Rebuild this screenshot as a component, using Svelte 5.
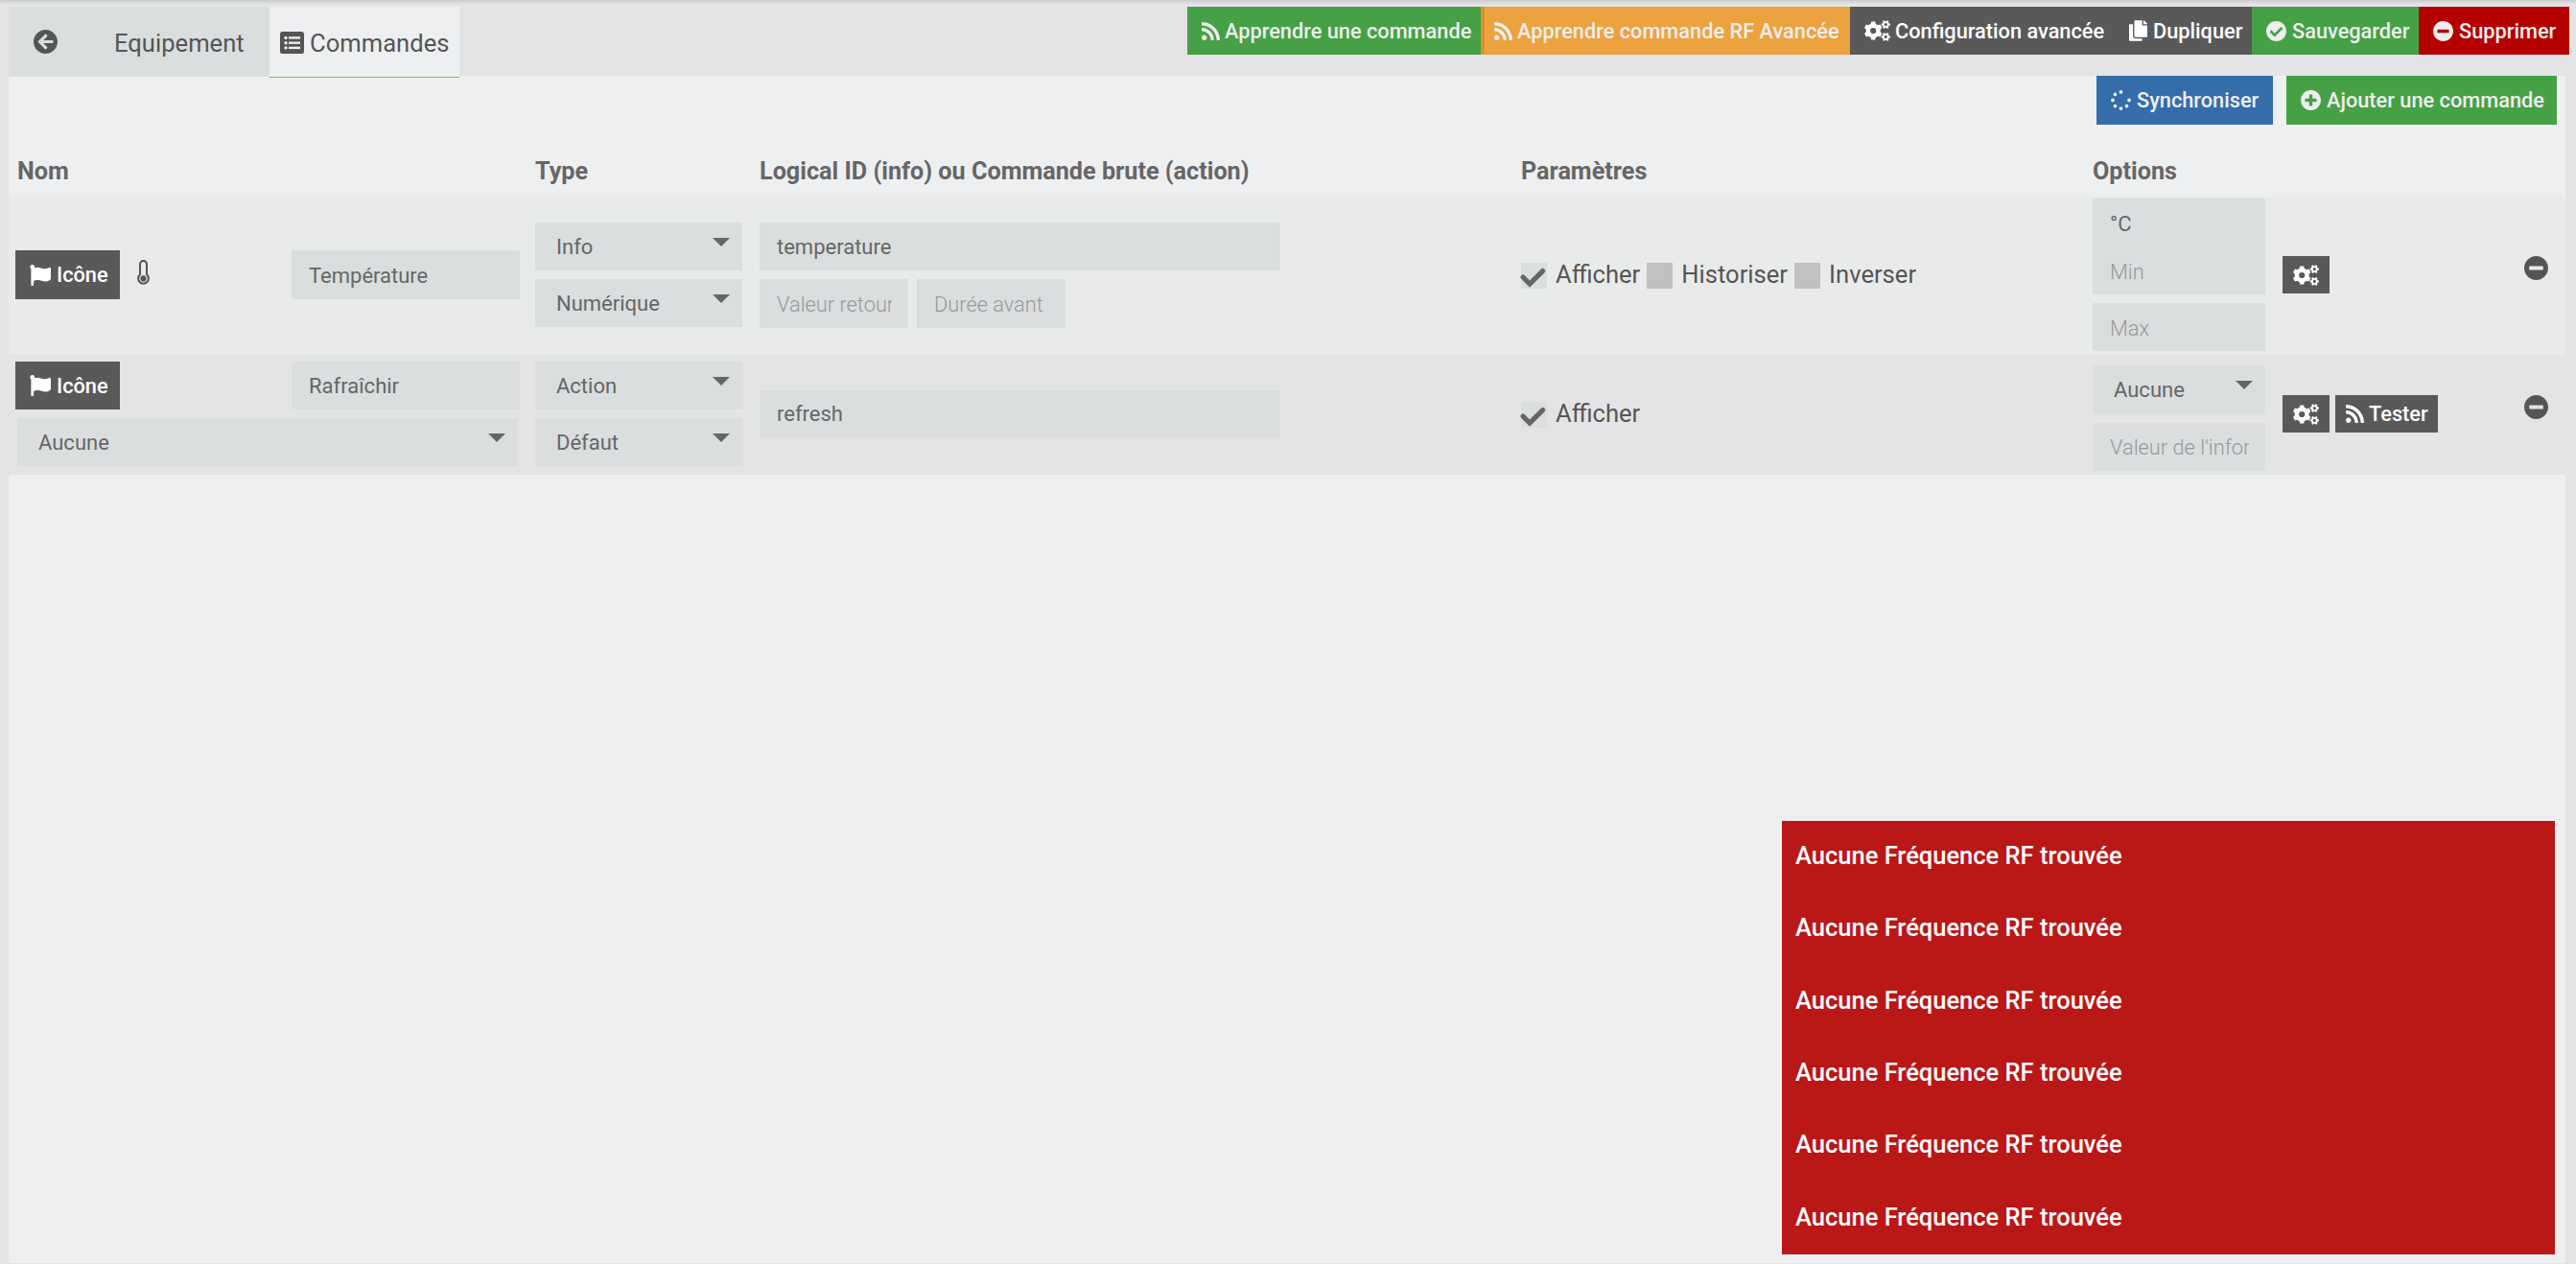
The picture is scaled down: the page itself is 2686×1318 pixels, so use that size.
<script lang="ts">
  type Field = { kind: 'select' | 'input'; value?: string; placeholder?: string };
  type Check = { label: string; checked: boolean };

  const icons: Record<string, { box: string; d: string }> = {
    back: {
      box: '8 8 496 496',
      d: 'M256 504C119 504 8 393 8 256S119 8 256 8s248 111 248 248-111 248-248 248zm28.9-143.6L209.4 288H392c13.3 0 24-10.7 24-24v-16c0-13.3-10.7-24-24-24H209.4l75.5-72.4c9.7-9.3 9.9-24.8.4-34.3l-11-10.9c-9.4-9.4-24.6-9.4-33.9 0L107.7 239c-9.4 9.4-9.4 24.6 0 33.9l132.7 132.7c9.4 9.4 24.6 9.4 33.9 0l11-10.9c9.5-9.5 9.3-25-.4-34.3z',
    },
    rss: {
      box: '0 32 448 448',
      d: 'M128.081 415.959c0 35.369-28.672 64.041-64.041 64.041S0 451.328 0 415.959s28.672-64.041 64.041-64.041 64.04 28.673 64.04 64.041zm175.66 47.25c-8.354-154.6-132.185-278.587-286.95-286.95C7.656 175.765 0 183.105 0 192.253v48.069c0 8.415 6.49 15.472 14.887 16.018 111.832 7.284 201.473 96.702 208.772 208.772.547 8.397 7.604 14.887 16.018 14.887h48.069c9.149.001 16.489-7.655 15.995-16.79zm144.249.288C439.596 229.677 251.465 40.445 16.503 32.01 7.473 31.686 0 38.981 0 48.016v48.068c0 8.625 6.835 15.645 15.453 15.999 191.179 7.839 344.627 161.316 352.465 352.465.353 8.618 7.373 15.453 15.999 15.453h48.068c9.034-.001 16.329-7.474 16.005-16.504z',
    },
    copy: {
      box: '0 0 448 512',
      d: 'M320 448v40c0 13.255-10.745 24-24 24H24c-13.255 0-24-10.745-24-24V120c0-13.255 10.745-24 24-24h72v296c0 30.879 25.121 56 56 56h168zm0-344V0H152c-13.255 0-24 10.745-24 24v368c0 13.255 10.745 24 24 24h272c13.255 0 24-10.745 24-24V128H344c-13.2 0-24-10.8-24-24zm120.971-31.029L375.029 7.029A24 24 0 0 0 358.059 0H352v96h96v-6.059a24 24 0 0 0-7.029-16.97z',
    },
    check: {
      box: '8 8 496 496',
      d: 'M504 256c0 136.967-111.033 248-248 248S8 392.967 8 256 119.033 8 256 8s248 111.033 248 248zM227.314 387.314l184-184c6.248-6.248 6.248-16.379 0-22.627l-22.627-22.627c-6.248-6.249-16.379-6.249-22.628 0L216 308.118l-70.059-70.059c-6.248-6.248-16.379-6.248-22.628 0l-22.627 22.627c-6.248 6.248-6.248 16.379 0 22.627l104 104c6.249 6.249 16.379 6.249 22.628.001z',
    },
    minus: {
      box: '8 8 496 496',
      d: 'M256 8C119 8 8 119 8 256s111 248 248 248 248-111 248-248S393 8 256 8zM124 296c-6.6 0-12-5.4-12-12v-56c0-6.6 5.4-12 12-12h264c6.6 0 12 5.4 12 12v56c0 6.6-5.4 12-12 12H124z',
    },
    plus: {
      box: '8 8 496 496',
      d: 'M256 8C119 8 8 119 8 256s111 248 248 248 248-111 248-248S393 8 256 8zm144 276c0 6.6-5.4 12-12 12h-92v92c0 6.6-5.4 12-12 12h-56c-6.6 0-12-5.4-12-12v-92h-92c-6.6 0-12-5.4-12-12v-56c0-6.6 5.4-12 12-12h92v-92c0-6.6 5.4-12 12-12h56c6.6 0 12 5.4 12 12v92h92c6.6 0 12 5.4 12 12v56z',
    },
    flag: {
      box: '0 0 512 512',
      d: 'M349.565 98.783C295.978 98.783 251.721 64 184.348 64c-24.955 0-47.309 4.384-68.045 12.013a55.947 55.947 0 0 0 3.586-23.562C118.117 24.015 94.806 1.206 66.338.048 34.345-1.254 8 24.296 8 56c0 19.026 9.497 35.825 24 45.945V488c0 13.255 10.745 24 24 24h16c13.255 0 24-10.745 24-24v-94.4c28.311-12.064 63.582-22.122 114.435-22.122 53.588 0 97.844 34.783 165.217 34.783 48.169 0 86.667-16.294 122.505-40.858C506.84 359.452 512 349.571 512 339.045v-243.1c0-23.393-24.269-38.87-45.485-29.016-34.338 15.948-76.454 31.854-116.95 31.854z',
    },
    spinner: {
      box: '0 0 512 512',
      d: [[256, 48], [109, 109], [48, 256], [109, 403], [256, 464], [403, 403], [464, 256]]
        .map(([x, y]) => `M${x - 46} ${y}a46 46 0 1 0 92 0a46 46 0 1 0-92 0z`)
        .join(''),
    },
    cogs: {
      box: '0 0 27 22',
      d: gear(9.2, 11, 9.7, 7.6, 3.1, 0) + gear(22.3, 4.6, 4.7, 3.5, 1.6, 30) + gear(22.3, 17.4, 4.7, 3.5, 1.6, 30),
    },
  };

  // six-toothed wheel with a round hole, for evenodd filling
  function gear(cx: number, cy: number, outer: number, inner: number, hole: number, turn: number) {
    const points: string[] = [];
    for (let tooth = 0; tooth < 6; tooth++) {
      for (const [offset, r] of [[-19, inner], [-12, outer], [12, outer], [19, inner]]) {
        const a = ((tooth * 60 + offset + turn) * Math.PI) / 180;
        points.push(`${(cx + r * Math.sin(a)).toFixed(2)} ${(cy - r * Math.cos(a)).toFixed(2)}`);
      }
    }
    return `M${points.join('L')}zM${cx - hole} ${cy}a${hole} ${hole} 0 1 0 ${hole * 2} 0a${hole} ${hole} 0 1 0-${hole * 2} 0z`;
  }

  const actions = [
    { label: 'Apprendre une commande', icon: 'rss', tone: 'success learn' },
    { label: 'Apprendre commande RF Avancée', icon: 'rss', tone: 'warning' },
    { label: 'Configuration avancée', icon: 'cogs', tone: 'neutral config' },
    { label: 'Dupliquer', icon: 'copy', tone: 'neutral duplicate' },
    { label: 'Sauvegarder', icon: 'check', tone: 'success save' },
    { label: 'Supprimer', icon: 'minus', tone: 'danger' },
  ];

  const commands: {
    name: string;
    thermometer: boolean;
    linked?: string;
    types: string[];
    logicalId: string;
    extras: string[];
    checks: Check[];
    options: Field[];
    testable: boolean;
  }[] = [
    {
      name: 'Température',
      thermometer: true,
      types: ['Info', 'Numérique'],
      logicalId: 'temperature',
      extras: ['Valeur retour', 'Durée avant'],
      checks: [
        { label: 'Afficher', checked: true },
        { label: 'Historiser', checked: false },
        { label: 'Inverser', checked: false },
      ],
      options: [
        { kind: 'input', value: '°C' },
        { kind: 'input', placeholder: 'Min' },
        { kind: 'input', placeholder: 'Max' },
      ],
      testable: false,
    },
    {
      name: 'Rafraîchir',
      thermometer: false,
      linked: 'Aucune',
      types: ['Action', 'Défaut'],
      logicalId: 'refresh',
      extras: [],
      checks: [{ label: 'Afficher', checked: true }],
      options: [
        { kind: 'select', value: 'Aucune' },
        { kind: 'input', placeholder: "Valeur de l'information" },
      ],
      testable: true,
    },
  ];

  const alerts = Array(6).fill('Aucune Fréquence RF trouvée');
</script>

{#snippet icon(name: string)}
  <svg class="icon {name}" viewBox={icons[name].box} aria-hidden="true">
    <path fill-rule="evenodd" d={icons[name].d} />
  </svg>
{/snippet}

{#snippet select(value: string)}
  <div class="select">
    <select><option>{value}</option></select>
  </div>
{/snippet}

<div class="page">
  <header>
    <nav>
      <a class="tab back-tab" href="#back" aria-label="Retour">{@render icon('back')}</a>
      <a class="tab" href="#equipment">Equipement</a>
      <a class="tab active" href="#commands">
        <svg class="icon list" viewBox="0 0 25 23" aria-hidden="true">
          <rect width="25" height="23" rx="2.5" />
          <g class="cut">
            <circle cx="6" cy="6.5" r="1.7" />
            <circle cx="6" cy="11.7" r="1.7" />
            <circle cx="6" cy="16.9" r="1.7" />
            <rect x="9" y="5.2" width="12" height="2.4" />
            <rect x="9" y="10.5" width="12" height="2.4" />
            <rect x="9" y="15.7" width="12" height="2.4" />
          </g>
        </svg>
        Commandes
      </a>
    </nav>
    <div class="actions">
      {#each actions as action}
        <button class="btn {action.tone}">{@render icon(action.icon)}{action.label}</button>
      {/each}
    </div>
  </header>

  <main>
    <div class="toolbar">
      <button class="btn primary">{@render icon('spinner')}Synchroniser</button>
      <button class="btn success">{@render icon('plus')}Ajouter une commande</button>
    </div>

    <div class="row head">
      <span class="first">Nom</span>
      <span>Type</span>
      <span>Logical ID (info) ou Commande brute (action)</span>
      <span>Paramètres</span>
      <span>Options</span>
    </div>

    {#each commands as command}
      <div class="row command" class:action={command.testable}>
        <div class="name">
          <div class="name-line">
            <button class="btn neutral icon-btn">{@render icon('flag')}Icône</button>
            {#if command.thermometer}
              <svg class="thermometer" viewBox="0 0 13 26" aria-hidden="true">
                <path d="M3 15.2V4.4a3.5 3.5 0 0 1 7 0v10.8a5.4 5.4 0 1 1-7 0z" />
                <circle cx="6.5" cy="19.4" r="3.1" />
              </svg>
            {/if}
            <input value={command.name} />
          </div>
          {#if command.linked}{@render select(command.linked)}{/if}
        </div>

        <div class="stack types">
          {#each command.types as type}{@render select(type)}{/each}
        </div>

        <div class="stack logical">
          <input value={command.logicalId} />
          {#if command.extras.length}
            <div class="extras">
              {#each command.extras as extra}<input placeholder={extra} />{/each}
            </div>
          {/if}
        </div>

        <div class="checks">
          {#each command.checks as check}
            <label>
              <span class="box" class:checked={check.checked}>
                {#if check.checked}
                  <svg viewBox="0 0 27 27" aria-hidden="true"><path d="M2 15l7 7L22.6 8.6" /></svg>
                {/if}
              </span>
              {check.label}
            </label>
          {/each}
        </div>

        <div class="stack options">
          {#each command.options as option}
            {#if option.kind === 'select'}
              {@render select(option.value ?? '')}
            {:else}
              <input value={option.value ?? ''} placeholder={option.placeholder} />
            {/if}
          {/each}
        </div>

        <div class="tools">
          <button class="btn neutral small" aria-label="Configurer">{@render icon('cogs')}</button>
          {#if command.testable}
            <button class="btn neutral small test">{@render icon('rss')}Tester</button>
          {/if}
          <button class="remove" aria-label="Supprimer la commande">{@render icon('minus')}</button>
        </div>
      </div>
    {/each}
  </main>

  <div class="toast" role="alert">
    {#each alerts as alert}<p>{alert}</p>{/each}
  </div>
</div>

<style>
  :global(body) {
    background: #e4e4e6;
  }
  .page {
    position: relative;
    box-sizing: border-box;
    height: 1318px;
    padding: 7px 7px 1px 9px;
    display: flex;
    flex-direction: column;
    overflow: hidden;
    background: linear-gradient(#c9c9cb, #d8d8da 2px, #e4e4e6 5px);
    color: #555;
    font-family: Roboto, sans-serif;
    font-size: 25.6px;
  }
  .page *,
  .page *::after {
    box-sizing: border-box;
  }
  header {
    display: flex;
    justify-content: space-between;
    height: 72px;
  }
  nav {
    display: flex;
    height: 74px;
    position: relative;
  }
  .tab {
    display: flex;
    align-items: center;
    width: 195px;
    height: 73px;
    padding: 2px 0 0 33px;
    background: #dadedf;
    color: #555;
    text-decoration: none;
  }
  .back-tab {
    width: 77px;
    padding: 0 26px;
  }
  .tab.active {
    width: 198px;
    height: 74px;
    padding: 2px 0 0 11px;
    border-bottom: 1px solid #85c41e;
    background: #eeeff1;
    white-space: nowrap;
  }
  .icon {
    flex: none;
    width: 21px;
    height: 21px;
    fill: currentColor;
  }
  .icon.back {
    width: 25px;
    height: 25px;
  }
  .icon.list {
    width: 25px;
    height: 23px;
    margin-right: 6px;
  }
  .cut {
    fill: #eeeff1;
  }
  .icon.rss {
    width: 19px;
    height: 19px;
    margin-right: -1px;
  }
  .icon.cogs {
    width: 27px;
    height: 22px;
    margin-right: -1px;
  }
  .icon.copy {
    width: 19px;
    height: 22px;
  }
  .icon.flag {
    width: 22px;
    height: 22px;
  }
  .actions {
    display: flex;
    height: 50px;
  }
  button {
    border: 0;
    font: inherit;
  }
  .btn {
    display: flex;
    align-items: center;
    gap: 6px;
    height: 100%;
    padding: 0 0 0 15px;
    color: #eee;
    font-size: 21.75px;
    font-weight: 500;
    white-space: nowrap;
  }
  .success {
    background: #46a146;
  }
  .learn {
    width: 306px;
  }
  .warning {
    width: 385px;
    padding-left: 10px;
    border-left: 4px solid #d9932b;
    background: #eda240;
  }
  .neutral {
    background: #595959;
    color: #fff;
  }
  .config {
    width: 276px;
  }
  .duplicate {
    width: 143px;
  }
  .save {
    width: 174px;
  }
  .danger {
    width: 157px;
    background: #b50000;
  }
  main {
    flex: 1;
    width: 2666px;
    background: #eeeff1;
  }
  .toolbar {
    display: flex;
    justify-content: flex-end;
    gap: 14px;
    height: 51px;
    padding-right: 9px;
  }
  .primary {
    width: 184px;
    background: #356dab;
  }
  .toolbar .success {
    width: 282px;
  }
  .row {
    display: grid;
    grid-template-columns: 549px 234px 794px 596px 198px 1fr;
  }
  .head {
    height: 75px;
    padding-top: 34px;
    color: #666;
    font-size: 25.2px;
    font-weight: 700;
    line-height: 30px;
  }
  .head .first {
    padding-left: 9px;
  }
  .command {
    height: 165px;
    padding-bottom: 2px;
    align-items: center;
    background: #e9ebea;
  }
  .command.action {
    height: 125px;
    background: #e4e4e6;
  }
  .name {
    display: flex;
    flex-direction: column;
    gap: 9px;
    padding: 0 18px 0 9px;
  }
  .name-line {
    display: flex;
    width: 533px;
    margin-left: -2px;
    height: 51px;
  }
  .action .name-line {
    height: 50px;
  }
  .name-line input {
    width: 238px;
    height: 100%;
    margin-left: auto;
    margin-right: 7px;
  }
  .icon-btn {
    width: 109px;
  }
  .thermometer {
    width: 13px;
    height: 26px;
    margin: 10px 0 0 18px;
    fill: none;
    stroke: #555;
    stroke-width: 2;
  }
  .thermometer circle {
    fill: #555;
    stroke: none;
  }
  input,
  select {
    display: block;
    width: 100%;
    height: 50px;
    margin: 0;
    padding: 2px 18px 0;
    border: 0;
    border-radius: 0;
    appearance: none;
    background: #dadedf;
    color: #666;
    font: 22px Roboto, sans-serif;
  }
  .action input,
  select {
    padding-top: 0;
  }
  input::placeholder {
    color: #999;
    font-size: 21.8px;
    font-weight: 300;
    opacity: 1;
  }
  select {
    padding-left: 22px;
  }
  .select {
    position: relative;
  }
  .select::after {
    content: '';
    position: absolute;
    top: 16px;
    right: 13px;
    border: 9px solid transparent;
    border-top-color: #666;
    border-bottom: 0;
  }
  .stack {
    display: flex;
    flex-direction: column;
    gap: 9px;
  }
  .types {
    width: 216px;
  }
  .logical {
    width: 543px;
  }
  .extras {
    display: flex;
    gap: 9px;
  }
  .extras input {
    width: 155px;
    height: 51px;
    padding-right: 17px;
  }
  .checks {
    display: flex;
    gap: 7px;
    padding-bottom: 1px;
  }
  label {
    display: flex;
    align-items: center;
    gap: 9px;
  }
  .box {
    width: 27px;
    height: 27px;
    margin-top: 3px;
    background: #c1c1c1;
  }
  .box.checked {
    background: #dadedf;
  }
  .box svg {
    display: block;
    fill: none;
    stroke: #666;
    stroke-width: 5.2;
    stroke-linecap: round;
    overflow: visible;
  }
  .options {
    width: 180px;
  }
  .action .options {
    padding-top: 9px;
  }
  .options input {
    padding-right: 17px;
  }
  .action .options select {
    height: 51px;
  }
  .options input:first-child + input {
    margin-top: -9px;
  }
  .tools {
    display: flex;
    align-items: flex-start;
    gap: 6px;
    padding-right: 18px;
  }
  .small {
    width: 49px;
    height: 39px;
    padding: 0 0 0 11px;
  }
  .test {
    width: 107px;
  }
  .remove {
    margin-left: auto;
    padding: 0;
    background: none;
    color: #555;
  }
  .remove .icon {
    display: block;
    width: 25px;
    height: 25px;
    margin: 0;
  }
  .toast {
    position: absolute;
    top: 856px;
    left: 1858px;
    width: 806px;
    height: 452px;
    display: grid;
    grid-template-rows: repeat(6, 1fr);
    align-items: center;
    padding-left: 14px;
    background: #ba1717;
    color: #fff;
    font-size: 25.5px;
    font-weight: 500;
  }
  .toast p {
    margin: 0;
    padding-bottom: 3px;
  }
</style>
